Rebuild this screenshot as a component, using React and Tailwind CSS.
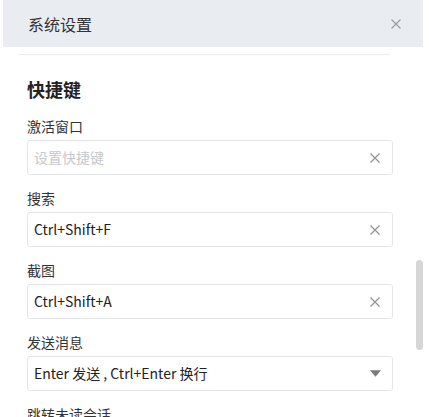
import React from 'react';

const font = { fontFamily: '"Noto Sans CJK SC", "Noto Sans", sans-serif' };

function XIcon({ className }) {
    return (
        <svg viewBox="0 0 12 12" className={className} fill="none" stroke="currentColor" strokeWidth="1.1">
            <path d="M1.5 1.5 L10.5 10.5 M10.5 1.5 L1.5 10.5" />
        </svg>
    );
}

function Field({ label, value, placeholder, select }) {
    return (
        <div className="mb-[13px]">
            <div className="text-[14px] leading-5 text-[#333] mb-1">{label}</div>
            <div className="h-[35px] border border-[#e2e4e8] rounded-[3px] flex items-center pl-[6px] pr-[11px]">
                <span className={`flex-1 text-[14px] ${value ? 'text-[#222]' : 'text-[#c6c8cc]'}`}>
                    {value || placeholder}
                </span>
                {select ? (
                    <svg viewBox="0 0 10 6" className="w-[11px] h-[7px] text-[#7b7b7b]" fill="currentColor">
                        <path d="M0 0 H10 L5 6 Z" />
                    </svg>
                ) : (
                    <XIcon className="w-[12px] h-[12px] text-[#8f8f8f]" />
                )}
            </div>
        </div>
    );
}

export default function App() {
    return (
        <div className="w-[429px] h-[417px] overflow-hidden bg-white pl-[3px] pr-[6px]" style={font}>
            {/* Header */}
            <div className="h-[47px] bg-[#e9ecf1] flex items-center justify-between pl-[25px] pr-[21px]">
                <span className="text-[16px] text-[#333]">系统设置</span>
                <XIcon className="w-[12px] h-[12px] text-[#9a9a9a]" />
            </div>

            <div className="flex">
                <div className="flex-1">
                    <div className="h-[8px] ml-[16px] mr-[26px] border-b border-[#ececec]" />

                    <div className="pl-[24px] pr-[23px]">
                        <div className="text-[18px] font-bold leading-[26px] text-[#222] mt-[21px] mb-[14px]">快捷键</div>
                        <Field label="激活窗口" placeholder="设置快捷键" />
                        <Field label="搜索" value="Ctrl+Shift+F" />
                        <Field label="截图" value="Ctrl+Shift+A" />
                        <Field label="发送消息" value="Enter 发送 , Ctrl+Enter 换行" select />
                        <div className="text-[14px] leading-5 text-[#333]">跳转未读会话</div>
                    </div>
                </div>

                {/* Scrollbar */}
                <div className="w-[7px]">
                    <div className="mt-[213px] h-[90px] rounded-full bg-[#d6d6d6]" />
                </div>
            </div>
        </div>
    );
}
